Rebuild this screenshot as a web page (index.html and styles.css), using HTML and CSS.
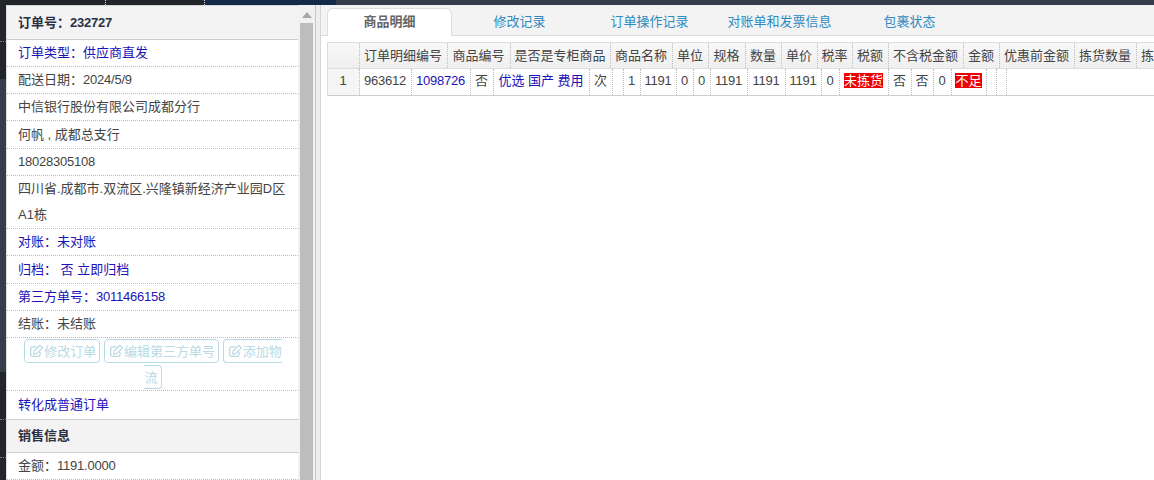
FILE: index.html
```html
<!DOCTYPE html>
<html lang="zh-CN">
<head>
<meta charset="utf-8">
<title>订单详情</title>
<link rel="stylesheet" href="styles.css">
</head>
<body>
<svg class="defs" width="0" height="0" aria-hidden="true">
  <symbol id="edit" viewBox="0 0 14 14">
    <path d="M10.8 8.4V11.4A1.9 1.9 0 0 1 8.9 13.3H2.6A1.9 1.9 0 0 1 0.7 11.4V5.1A1.9 1.9 0 0 1 2.6 3.2H7.6" fill="none" stroke="currentColor" stroke-width="1.4"/>
    <path d="M4.4 7.8L10.6 1.4L13.4 4.1L7.1 10.4L4 10.8Z" fill="none" stroke="currentColor" stroke-width="1.3"/>
  </symbol>
</svg>
<div class="topbar">
  <div class="seg-a"></div>
  <div class="seg-b"></div>
  <div class="seg-navy"></div>
  <div class="seg-slate"></div>
</div>
<div class="main">
  <div class="strip">
    <div class="strip-a"><i class="dot"></i></div>
    <div class="strip-slate"></div>
    <div class="strip-b"><i class="dot dot-1"></i><i class="dot dot-2"></i></div>
  </div>
  <aside class="panel">
    <div class="head">订单号：<span class="n">232727</span></div>
    <div class="row link">订单类型：供应商直发</div>
    <div class="row">配送日期：<span class="n">2024/5/9</span></div>
    <div class="row">中信银行股份有限公司成都分行</div>
    <div class="row tall">何帆 , 成都总支行</div>
    <div class="row"><span class="n">18028305108</span></div>
    <div class="row">四川省.成都市.双流区.兴隆镇新经济产业园D区A1栋</div>
    <div class="row link">对账：未对账</div>
    <div class="row link tall">归档： 否 立即归档</div>
    <div class="row link">第三方单号：<span class="n">3011466158</span></div>
    <div class="row">结账：未结账</div>
    <div class="row actions">
      <span class="btn"><svg class="ico"><use href="#edit"/></svg>修改订单</span>
      <span class="btn"><svg class="ico"><use href="#edit"/></svg>编辑第三方单号</span>
      <span class="btn"><svg class="ico"><use href="#edit"/></svg>添加物流</span>
    </div>
    <div class="row link last">转化成普通订单</div>
    <div class="head head-sub">销售信息</div>
    <div class="row">金额：<span class="n">1191.0000</span></div>
  </aside>
  <div class="scroll">
    <div class="scroll-arrow"></div>
    <div class="scroll-thumb"></div>
  </div>
  <div class="gutter"></div>
  <section class="content">
    <nav class="tabs">
      <span class="tab active">商品明细</span>
      <span class="tab">修改记录</span>
      <span class="tab">订单操作记录</span>
      <span class="tab">对账单和发票信息</span>
      <span class="tab">包裹状态</span>
    </nav>
    <div class="table">
      <div class="thead">
        <span></span><span>订单明细编号</span><span>商品编号</span><span>是否是专柜商品</span><span>商品名称</span><span>单位</span><span>规格</span><span>数量</span><span>单价</span><span>税率</span><span>税额</span><span>不含税金额</span><span>金额</span><span>优惠前金额</span><span>拣货数量</span><span>拣货状态</span>
      </div>
      <div class="tbody">
        <span class="idx">1</span><span class="n">963612</span><span class="n link">1098726</span><span>否</span><span class="link">优选 国产 费用</span><span>次</span><span></span><span>1</span><span class="n">1191</span><span>0</span><span>0</span><span class="n">1191</span><span class="n">1191</span><span class="n">1191</span><span>0</span><span><b class="alert">未拣货</b></span><span>否</span><span>否</span><span>0</span><span><b class="alert">不足</b></span><span></span><span></span>
      </div>
    </div>
  </section>
</div>
</body>
</html>
```
FILE: styles.css
```css
html, body {
  margin: 0;
  height: 480px;
  overflow: hidden;
  background: #fff;
}
body {
  font: 13px/26px "Liberation Sans", "Noto Sans CJK SC", sans-serif;
  color: #444;
  display: flex;
  flex-direction: column;
}
.defs { position: absolute; }
.n { letter-spacing: -0.23px; }
.link { color: #1d12b8; }

.topbar { display: flex; height: 5px; flex: none; }
.seg-a { width: 105px; background: #22262a; border-right: 1px dotted #ddd; }
.seg-b { width: 98px; background: #22262a; border-right: 1px dotted #ddd; }
.seg-navy { width: 131px; background: #15294b; }
.seg-slate { flex: 1; background: #333e4a; }

.main { display: flex; flex: 1; min-height: 0; }

.strip { width: 6px; display: flex; flex-direction: column; flex: none; }
.strip-slate { height: 293px; background: #333e4a; }
.strip-a { height: 74px; background: #22262a; box-sizing: border-box; padding-top: 36px; }
.strip-b { flex: 1; background: #22262a; box-sizing: border-box; padding-top: 47px; }
.dot { display: block; border-top: 1px dotted #777; }
.dot-2 { margin-top: 37px; }

.panel {
  width: 291px;
  flex: none;
  background: #fff;
  border-left: 1px solid #ddd;
  border-top: 1px solid #d4d6da;
  overflow: hidden;
}
.head {
  background: #f3f3f3;
  font-weight: bold;
  color: #2b3044;
  padding-left: 11px;
  line-height: 33px;
  border-bottom: 1px solid #ccc;
}
.head-sub { line-height: 32px; }
.row {
  padding: 0 12px 0 11px;
  border-bottom: 1px dotted #bbb;
}
.tall { line-height: 27px; }
.last { line-height: 28px; border-bottom: 1px solid #ccc; }

.actions { text-align: center; color: #b9dae4; padding-right: 10px; }
.btn {
  border: 1px solid #b7dbe6;
  border-radius: 4px;
  padding: 3.5px 3px 3.5px 5px;
}
.ico { width: 13px; height: 13px; vertical-align: -2px; margin-right: 1px; }

.scroll {
  width: 17px;
  flex: none;
  background: #f1f1f1;
  border-right: 1px solid #c8c8c8;
  display: flex;
  flex-direction: column;
  align-items: center;
}
.scroll-arrow {
  margin: 7px 0 5px;
  border: 5px solid transparent;
  border-top: 0;
  border-bottom: 6px solid #a6a6a6;
  flex: none;
}
.scroll-thumb { width: 13px; flex: 1; background: #bdbdbd; }

.gutter { width: 4px; background: #eee; flex: none; border-right: 1px solid #d6d6d6; }

.content { flex: 1; min-width: 0; overflow: hidden; background: #fff; }
.tabs {
  display: flex;
  gap: 5px;
  height: 31px;
  box-sizing: border-box;
  padding: 3px 0 0 6px;
  background: #f3f3f3;
  border-bottom: 1px solid #ddd;
}
.tab {
  width: 125px;
  flex: none;
  box-sizing: border-box;
  height: 27px;
  line-height: 28px;
  text-align: center;
  color: #2f8ac0;
}
.active {
  background: #fff;
  color: #666;
  font-weight: bold;
  border: 1px solid #ddd;
  border-bottom: 0;
  border-radius: 6px 6px 0 0;
  height: 28px;
  line-height: 26px;
}

.table {
  margin: 6px 0 0 6px;
  border-top: 1px solid #ddd;
  border-bottom: 1px solid #ccc;
  border-left: 1px solid #ddd;
}
.thead, .tbody { display: grid; width: max-content; }
.thead {
  grid-template-columns: 32px 88px 63px 100px 62px 36px 37px 36px 36px 35px 36px 75px 36px 75px 62px 62px;
  height: 25px;
  line-height: 25px;
  background: linear-gradient(#f8f8f8, #efefef);
  border-bottom: 1px solid #ddd;
}
.tbody {
  grid-template-columns: 32px 52px 59px 23px 96px 23px 11px 17px 36px 17px 17px 37px 38px 36px 18px 49px 23px 22px 18px 35px 10px 10px;
  height: 26px;
  line-height: 24px;
}
.thead span, .tbody span {
  text-align: center;
  white-space: nowrap;
  border-right: 1px dotted #bbb;
  box-sizing: border-box;
  overflow: hidden;
  padding-right: 1px;
}
.thead span:last-child { overflow: visible; text-align: left; padding-left: 4px; }
.idx { background: #f5f5f5; }
.alert {
  font-weight: normal;
  color: #fff;
  background: #ee0000;
}
```
